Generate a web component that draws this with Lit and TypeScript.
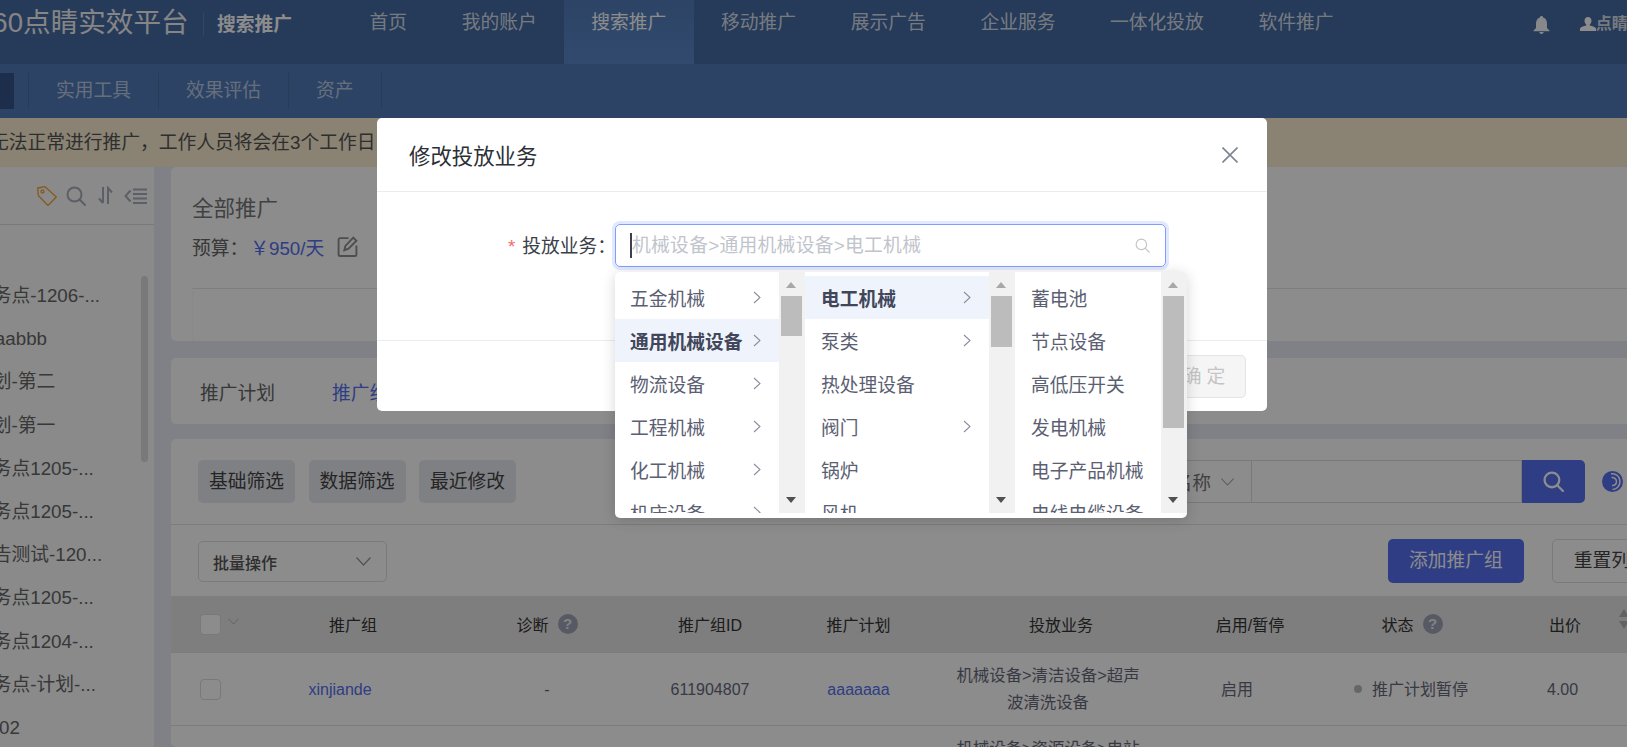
import { LitElement, css, html, nothing } from "lit";
import { customElement } from "lit/decorators.js";

const NAV = ["首页", "我的账户", "搜索推广", "移动推广", "展示广告", "企业服务", "一体化投放", "软件推广"];
const SUB = ["实用工具", "效果评估", "资产"];
const PLANS = [
	"服务点-1206-...",
	"aaaabbb",
	"计划-第二",
	"计划-第一",
	"服务点1205-...",
	"服务点1205-...",
	"广告测试-120...",
	"服务点1205-...",
	"服务点1204-...",
	"服务点-计划-...",
	"tes02",
];

interface CascadeItem {
	label: string;
	more?: boolean;
	active?: boolean;
}

const CASCADE: { width: number; thumb: number; items: CascadeItem[] }[] = [
	{
		width: 164,
		thumb: 40,
		items: [
			{ label: "五金机械", more: true },
			{ label: "通用机械设备", more: true, active: true },
			{ label: "物流设备", more: true },
			{ label: "工程机械", more: true },
			{ label: "化工机械", more: true },
			{ label: "机床设备", more: true },
		],
	},
	{
		width: 184,
		thumb: 51,
		items: [
			{ label: "电工机械", more: true, active: true },
			{ label: "泵类", more: true },
			{ label: "热处理设备" },
			{ label: "阀门", more: true },
			{ label: "锅炉" },
			{ label: "风机" },
		],
	},
	{
		width: 146,
		thumb: 132,
		items: [
			{ label: "蓄电池" },
			{ label: "节点设备" },
			{ label: "高低压开关" },
			{ label: "发电机械" },
			{ label: "电子产品机械" },
			{ label: "电线电缆设备" },
		],
	},
];

const chevronDown = (w = 15, h = 9) => html`<svg width=${w} height=${h} viewBox="0 0 15 9" fill="none" stroke="currentColor" stroke-width="1.3"><path d="M0.5 0.5 7.5 8 14.5 0.5" /></svg>`;

const searchIcon = (size: number, stroke: string, sw = 2) => html`<svg width=${size} height=${size} viewBox="0 0 20 20" fill="none" stroke=${stroke} stroke-width=${sw} stroke-linecap="round"><circle cx="8.5" cy="8.5" r="7" /><path d="M13.8 13.8 19 19" /></svg>`;

@customElement("app-root")
export class AppRoot extends LitElement {
	static override styles = css`
		:host {
			display: block;
			position: relative;
			width: 1627px;
			height: 747px;
			overflow: hidden;
			background: #e7ebf4;
			font-family: "Liberation Sans", "Noto Sans CJK SC", sans-serif;
			font-size: 18.75px;
			color: #333;
		}
		.top {
			display: flex;
			height: 64px;
			background: #456aa3;
			color: rgba(255, 255, 255, 0.8);
			white-space: nowrap;
		}
		.brand {
			flex: none;
			margin-left: -23px;
			line-height: 46px;
			font-size: 27.6px;
			color: #f2f2f2;
		}
		.divider {
			flex: none;
			width: 1px;
			height: 23px;
			margin: 13px 13.5px 0 14px;
			background: #5f7fb0;
		}
		.product {
			flex: none;
			line-height: 49px;
			font-weight: 700;
			color: #fff;
		}
		.nav {
			display: flex;
			flex: none;
			margin-left: 50px;
		}
		.nav span {
			padding: 0 27.35px;
			line-height: 46px;
		}
		.nav .on {
			background: linear-gradient(180deg, #527cba, #5a87c8);
			color: #fff;
		}
		.bell {
			flex: none;
			margin: 16px 0 0 172px;
		}
		.user {
			display: flex;
			flex: none;
			margin-left: 30px;
			line-height: 47px;
			font-size: 16px;
			font-weight: 700;
		}
		.user svg {
			margin-top: 17px;
		}
		.sub {
			display: flex;
			align-items: center;
			height: 54px;
			background: #507ab8;
			color: rgba(255, 255, 255, 0.62);
			white-space: nowrap;
		}
		.sub-on {
			width: 14px;
			height: 36px;
			margin-right: 14px;
			background: #35558c;
		}
		.sub span {
			height: 36px;
			padding: 0 27px;
			line-height: 36px;
			border-left: 1px solid #47709f;
		}
		.sub span:last-child {
			border-right: 1px solid #47709f;
		}
		.notice {
			height: 49px;
			margin-left: -10px;
			line-height: 50px;
			background: #fbedd1;
			color: #555;
			white-space: nowrap;
		}
		.body {
			display: flex;
			height: 580px;
		}
		.side {
			position: relative;
			flex: none;
			width: 154px;
			background: #fbfbfb;
		}
		.side-head {
			display: flex;
			align-items: center;
			height: 58px;
			padding-left: 37px;
			border-bottom: 1px solid #dcdcdc;
			box-sizing: border-box;
		}
		.side-head svg {
			flex: none;
		}
		.plans {
			padding-top: 49px;
			margin-left: -26px;
			color: #666;
			white-space: nowrap;
		}
		.plans div {
			height: 43.2px;
			line-height: 43.2px;
		}
		.side-bar {
			position: absolute;
			top: 109px;
			left: 141px;
			width: 7px;
			height: 186px;
			border-radius: 4px;
			background: #dcdcdc;
		}
		.main {
			flex: 1;
			min-width: 0;
			margin-left: 17px;
		}
		.card {
			background: #fff;
			border-radius: 5px 0 0 5px;
			box-sizing: border-box;
		}
		.summary {
			display: flex;
			flex-direction: column;
			height: 174px;
			padding: 27px 0 0 21px;
		}
		.summary h2 {
			margin: 0;
			font-size: 21.5px;
			font-weight: 400;
			line-height: 30px;
			color: #777;
		}
		.budget {
			display: flex;
			align-items: center;
			height: 30px;
			margin-top: 7px;
			color: #666;
		}
		.budget b {
			margin-left: 2px;
			font-weight: 400;
			color: #5470f0;
		}
		.budget svg {
			margin-left: 13px;
		}
		.chart {
			flex: 1;
			margin-top: 27px;
			border-top: 1px solid #e4e6f0;
			border-left: 1px solid #fafafa;
		}
		.tabs {
			display: flex;
			align-items: center;
			gap: 57px;
			height: 66px;
			margin-top: 17px;
			padding-left: 29px;
			color: #666;
		}
		.tabs .on {
			color: #5470f0;
		}
		.list {
			margin-top: 15px;
			height: 308px;
			overflow: hidden;
		}
		.filters {
			display: flex;
			height: 86px;
			padding: 21px 4px 0 27px;
			border-bottom: 1px solid #e2e2e2;
			box-sizing: border-box;
		}
		.chip {
			flex: none;
			height: 43px;
			margin-right: 13.5px;
			padding: 0 11px;
			line-height: 43px;
			border-radius: 5px;
			background: #e8eaf0;
			color: #444;
		}
		.find {
			display: flex;
			flex: none;
			margin-left: auto;
			height: 43px;
			color: #777;
		}
		.find-select {
			display: flex;
			align-items: center;
			justify-content: flex-end;
			width: 152px;
			padding-right: 17px;
			box-sizing: border-box;
			border: 1px solid #dcdcdc;
			white-space: nowrap;
		}
		.find-select svg {
			flex: none;
			margin-left: 10px;
			color: #aaa;
		}
		.find-input {
			width: 270px;
			border: 1px solid #dcdcdc;
			border-left: 0;
			box-sizing: border-box;
		}
		.find-btn {
			display: flex;
			align-items: center;
			justify-content: center;
			width: 63px;
			border-radius: 0 5px 5px 0;
			background: #5470f0;
		}
		.swirl {
			margin: 11px 0 0 17px;
		}
		.actions {
			display: flex;
			align-items: center;
			height: 71px;
			padding-left: 27px;
			white-space: nowrap;
		}
		.bulk {
			display: flex;
			flex: none;
			align-items: center;
			justify-content: space-between;
			width: 189px;
			height: 41px;
			margin-top: 2px;
			padding: 0 15px 0 14px;
			box-sizing: border-box;
			border: 1px solid #dedede;
			border-radius: 5px;
			font-size: 16px;
			font-weight: 500;
			color: #555;
		}
		.bulk svg {
			color: #999;
		}
		.add {
			flex: none;
			margin-left: 1001px;
			padding: 0 21px;
			height: 44px;
			line-height: 44px;
			border-radius: 5px;
			background: #5470f0;
			color: #fff;
		}
		.reset {
			flex: none;
			margin-left: 28px;
			width: 137px;
			height: 44px;
			padding-left: 21px;
			line-height: 42px;
			border: 1px solid #dedede;
			border-radius: 5px;
			box-sizing: border-box;
			color: #444;
		}
		.row {
			display: grid;
			grid-template-columns: 99px 166px 222px 104px 193px 212px 166px 140px 1fr;
			align-items: center;
			justify-items: center;
			text-align: center;
			font-size: 16px;
			box-sizing: border-box;
			border-bottom: 1px solid #e2e2e2;
		}
		.head {
			height: 57px;
			background: #e5e5e5;
			color: #333;
		}
		.data {
			height: 73px;
			line-height: 27px;
			color: #66697a;
		}
		.biz {
			padding-right: 26px;
			font-size: 16.4px;
		}
		.check-cell {
			display: flex;
			align-items: center;
			justify-self: start;
			margin-left: 29px;
		}
		.check {
			width: 21px;
			height: 21px;
			border: 1px solid #dcdcdc;
			border-radius: 4px;
			background: #fff;
			box-sizing: border-box;
		}
		.check-cell svg {
			margin: 0 0 5px 7px;
			color: #b5b5b5;
		}
		.with-help {
			display: flex;
			align-items: center;
			gap: 9px;
		}
		.with-help.right {
			margin-left: 18px;
		}
		.help {
			width: 20px;
			height: 20px;
			border-radius: 50%;
			background: #9ea3b6;
			color: #ededed;
			font-size: 15px;
			font-weight: 700;
			line-height: 20px;
			text-align: center;
		}
		.price {
			position: relative;
			justify-self: stretch;
			padding-left: 74px;
			text-align: left;
		}
		.head .price {
			padding-left: 76px;
		}
		.sort {
			position: absolute;
			top: -4px;
			left: 146px;
		}
		.link {
			color: #5470f0;
		}
		.shift {
			padding-right: 26px;
		}
		.state {
			display: flex;
			align-items: center;
			gap: 10px;
			margin-left: 16px;
			white-space: nowrap;
		}
		.state i {
			width: 8px;
			height: 8px;
			border-radius: 50%;
			background: #bbb;
		}

		.mask {
			position: absolute;
			inset: 0;
			background: rgba(0, 0, 0, 0.45);
		}
		.modal {
			position: absolute;
			top: 118px;
			left: 377px;
			display: flex;
			flex-direction: column;
			width: 890px;
			height: 293px;
			border-radius: 5px;
			background: #fff;
		}
		.modal-head {
			display: flex;
			align-items: center;
			justify-content: space-between;
			height: 73px;
			padding: 0 29px 0 32px;
			border-bottom: 1px solid #ececec;
			font-size: 21.4px;
			color: #2c2f36;
		}
		.modal-body {
			position: relative;
			display: flex;
			height: 149px;
			padding: 32px 0 0 131px;
			border-bottom: 1px solid #ececec;
			box-sizing: border-box;
		}
		.label {
			flex: none;
			width: 107px;
			line-height: 46px;
			color: #3b3f4a;
			white-space: nowrap;
		}
		.label em {
			margin-right: 7px;
			font-style: normal;
			color: #f56c6c;
		}
		.input {
			display: flex;
			align-items: center;
			justify-content: space-between;
			width: 551px;
			height: 43px;
			padding: 0 15px 0 14px;
			box-sizing: border-box;
			border: 1.5px solid #7f9eff;
			border-radius: 5px;
			box-shadow: 0 0 0 3px #e2e9ff;
			color: #c0c4cc;
			white-space: nowrap;
		}
		.input span {
			border-left: 2px solid #3b3f50;
			height: 25px;
			line-height: 25px;
			letter-spacing: 0.3px;
		}
		.modal-foot {
			display: flex;
			justify-content: flex-end;
			padding: 14px 21px 0 0;
		}
		.ok {
			width: 80px;
			height: 43px;
			padding-right: 4px;
			line-height: 41px;
			box-sizing: border-box;
			text-align: center;
			border: 1px solid #e4e4e8;
			border-radius: 5px;
			background: #f5f5f5;
			color: #c4c4c4;
		}
		.cascade {
			position: absolute;
			top: 80px;
			left: 238px;
			display: flex;
			width: 572px;
			height: 246px;
			padding-bottom: 5px;
			box-sizing: border-box;
			border-radius: 5px;
			background: #fff;
			box-shadow: 0 2px 14px rgba(0, 0, 0, 0.16);
			overflow: hidden;
		}
		.col {
			flex: none;
			padding-top: 4px;
			box-sizing: border-box;
			overflow: hidden;
			color: #5a6072;
			white-space: nowrap;
		}
		.opt {
			display: flex;
			align-items: center;
			justify-content: space-between;
			height: 43px;
			padding: 0 18px 0 15px;
		}
		.col + .track + .col .opt {
			padding-left: 16px;
		}
		.opt svg {
			flex: none;
			color: #8a8f9e;
		}
		.opt.on {
			background: #eff4fc;
			font-weight: 700;
			color: #41465a;
		}
		.track {
			position: relative;
			flex: none;
			width: 26px;
			background: #f1f1f1;
		}
		.thumb {
			position: absolute;
			top: 24px;
			left: 2px;
			width: 21px;
			background: #bcbcbc;
		}
		.arrow {
			position: absolute;
			left: 7px;
			width: 0;
			height: 0;
			border-left: 5.5px solid transparent;
			border-right: 5.5px solid transparent;
		}
		.arrow.up {
			top: 10px;
			border-bottom: 6px solid #a8a8a8;
		}
		.arrow.down {
			bottom: 10px;
			border-top: 6px solid #505050;
		}
	`;

	private renderCascade() {
		return html`<div class="cascade">
			${CASCADE.map(
				(col) => html`<div class="col" style="width:${col.width}px">
						${col.items.map(
							(item) => html`<div class="opt ${item.active ? "on" : ""}">
								<span>${item.label}</span>
								${item.more
									? html`<svg width="8" height="13" viewBox="0 0 8 13" fill="none" stroke="currentColor" stroke-width="1.1"><path d="M1 1l6 5.5-6 5.5" /></svg>`
									: nothing}
							</div>`,
						)}
					</div>
					<div class="track">
						<div class="arrow up"></div>
						<div class="thumb" style="height:${col.thumb}px"></div>
						<div class="arrow down"></div>
					</div>`,
			)}
		</div>`;
	}

	private renderTable() {
		const help = html`<span class="help">?</span>`;
		const sort = html`<svg class="sort" width="10" height="22" viewBox="0 0 10 22" fill="#b4b4b4"><path d="M5 1 10 9H0zM0 13h10l-5 8z" /></svg>`;
		return html`<div class="row head">
				<div class="check-cell"><div class="check"></div>${chevronDown(11, 7)}</div>
				<div>推广组</div>
				<div class="with-help">诊断 ${help}</div>
				<div>推广组ID</div>
				<div>推广计划</div>
				<div>投放业务</div>
				<div>启用/暂停</div>
				<div class="with-help right">状态 ${help}</div>
				<div class="price">出价${sort}</div>
			</div>
			<div class="row data">
				<div class="check-cell"><div class="check"></div></div>
				<div class="link shift">xinjiande</div>
				<div>-</div>
				<div>611904807</div>
				<div class="link">aaaaaaa</div>
				<div class="biz">机械设备>清洁设备>超声<br />波清洗设备</div>
				<div class="shift">启用</div>
				<div class="state"><i></i>推广计划暂停</div>
				<div class="price">4.00</div>
			</div>
			<div class="row data">
				<div class="check-cell"><div class="check"></div></div>
				<div class="link shift">xinjiande</div>
				<div>-</div>
				<div>611904806</div>
				<div class="link">aaaaaaa</div>
				<div class="biz">机械设备>资源设备>电站<br />设备</div>
				<div class="shift">启用</div>
				<div class="state"><i></i>推广计划暂停</div>
				<div class="price">4.00</div>
			</div>`;
	}

	override render() {
		return html`
			<div class="top">
				<div class="brand">360点睛实效平台</div>
				<div class="divider"></div>
				<div class="product">搜索推广</div>
				<div class="nav">
					${NAV.map((n, i) => html`<span class=${i === 2 ? "on" : ""}>${n}</span>`)}
				</div>
				<svg class="bell" width="17" height="18" viewBox="0 0 17 18" fill="#fff" opacity="0.95">
					<path d="M8.5 0c1 0 1.5.6 1.6 1.4C12.8 2.2 14 4.500 14 7.500V12l2.500 2.500v.8H.5v-.8L3 12V7.500c0-3 1.200-5.300 3.900-6.100C7 .6 7.500 0 8.500 0zM6.300 16h4.400c-.2 1.200-1.100 2-2.200 2s-2-.8-2.200-2z" />
				</svg>
				<div class="user">
					<svg width="16" height="14" viewBox="0 0 16 14" fill="#fff">
						<path d="M8 0c2.100 0 3.500 1.600 3.500 3.800 0 1.500-.7 2.900-1.700 3.600v1c2.800.6 5.700 1.600 6.200 3.200V14H0v-2.400c.5-1.600 3.400-2.600 6.200-3.200v-1C5.200 6.700 4.500 5.300 4.500 3.800 4.500 1.600 5.900 0 8 0z" />
					</svg>
					<span>点睛用户</span>
				</div>
			</div>
			<div class="sub">
				<div class="sub-on"></div>
				${SUB.map((s) => html`<span>${s}</span>`)}
			</div>
			<div class="notice">无法正常进行推广，工作人员将会在3个工作日内完成审核，请您耐心等待</div>
			<div class="body">
				<aside class="side">
					<div class="side-head">
						<svg width="20" height="20" viewBox="0 0 20 20" fill="none" stroke="#f0a53a" stroke-width="1.3" stroke-linejoin="round">
							<path d="M.7 2 8 .7 19.300 11 11 19.500 1.300 9.500z" /><circle cx="5.500" cy="5.500" r="1.500" />
						</svg>
						<svg style="margin-left:9px" width="20" height="20" viewBox="0 0 20 20" fill="none" stroke="#a8adbb" stroke-width="2" stroke-linecap="round">
							<circle cx="8.500" cy="8.500" r="7" /><path d="M13.800 13.800 19 19" />
						</svg>
						<svg style="margin-left:12px" width="15" height="19" viewBox="0 0 15 19" fill="none" stroke="#a8adbb" stroke-width="2">
							<path d="M5 1v16M1 12.500 5 17M10 18V2l4 4.500" />
						</svg>
						<svg style="margin-left:11px" width="23" height="16" viewBox="0 0 23 16" fill="none" stroke="#a8adbb" stroke-width="2">
							<path d="M6.500 2.500 1.500 8l5 5.500M9 1.500h14M9 6h14M9 10.500h14M9 15h14" />
						</svg>
					</div>
					<div class="plans">${PLANS.map((p) => html`<div>${p}</div>`)}</div>
					<div class="side-bar"></div>
				</aside>
				<div class="main">
					<section class="card summary">
						<h2>全部推广</h2>
						<div class="budget">
							预算：<b>￥950/天</b>
							<svg width="21" height="21" viewBox="0 0 20 20" fill="none" stroke="#8f8f8f" stroke-width="1.800">
								<path d="M11 2H3a1.500 1.500 0 0 0-1.500 1.500v14A1.500 1.500 0 0 0 3 19h14a1.500 1.500 0 0 0 1.500-1.500V9" />
								<path d="M7 13.500 8 9.500 15.500 1.500l3 3L11 12z" />
							</svg>
						</div>
						<div class="chart"></div>
					</section>
					<section class="card tabs">
						<span>推广计划</span>
						<span class="on">推广组</span>
					</section>
					<section class="card list">
						<div class="filters">
							<div class="chip">基础筛选</div>
							<div class="chip">数据筛选</div>
							<div class="chip">最近修改</div>
							<div class="find">
								<div class="find-select">推广组名称 ${chevronDown(13, 8)}</div>
								<div class="find-input"></div>
								<div class="find-btn">${searchIcon(21, "#fff", 2.2)}</div>
								<svg class="swirl" width="21" height="21" viewBox="0 0 21 21" fill="none">
									<circle cx="10.500" cy="10.500" r="10.500" fill="#5470f0" />
									<path d="M9 2.800c5-.8 9 2.800 9 7.700s-3.600 8-7.500 8" stroke="#fff" stroke-width="1.500" />
									<path d="M9.500 6.500c2.500-.5 5 1.500 5 4s-2 4.500-4.500 4" stroke="#fff" stroke-width="1.500" />
								</svg>
							</div>
						</div>
						<div class="actions">
							<div class="bulk">批量操作 ${chevronDown()}</div>
							<div class="add">添加推广组</div>
							<div class="reset">重置列表</div>
						</div>
						${this.renderTable()}
					</section>
				</div>
			</div>
			<div class="mask"></div>
			<div class="modal">
				<div class="modal-head">
					<span>修改投放业务</span>
					<svg width="16" height="16" viewBox="0 0 16 16" fill="none" stroke="#7e8494" stroke-width="1.600">
						<path d="M.5.5l15 15M15.500.5l-15 15" />
					</svg>
				</div>
				<div class="modal-body">
					<div class="label"><em>*</em>投放业务：</div>
					<div class="input">
						<span>机械设备>通用机械设备>电工机械</span>
						${searchIcon(15, "#c4c4c4", 1.5)}
					</div>
					${this.renderCascade()}
				</div>
				<div class="modal-foot"><div class="ok">确 定</div></div>
			</div>
		`;
	}
}
